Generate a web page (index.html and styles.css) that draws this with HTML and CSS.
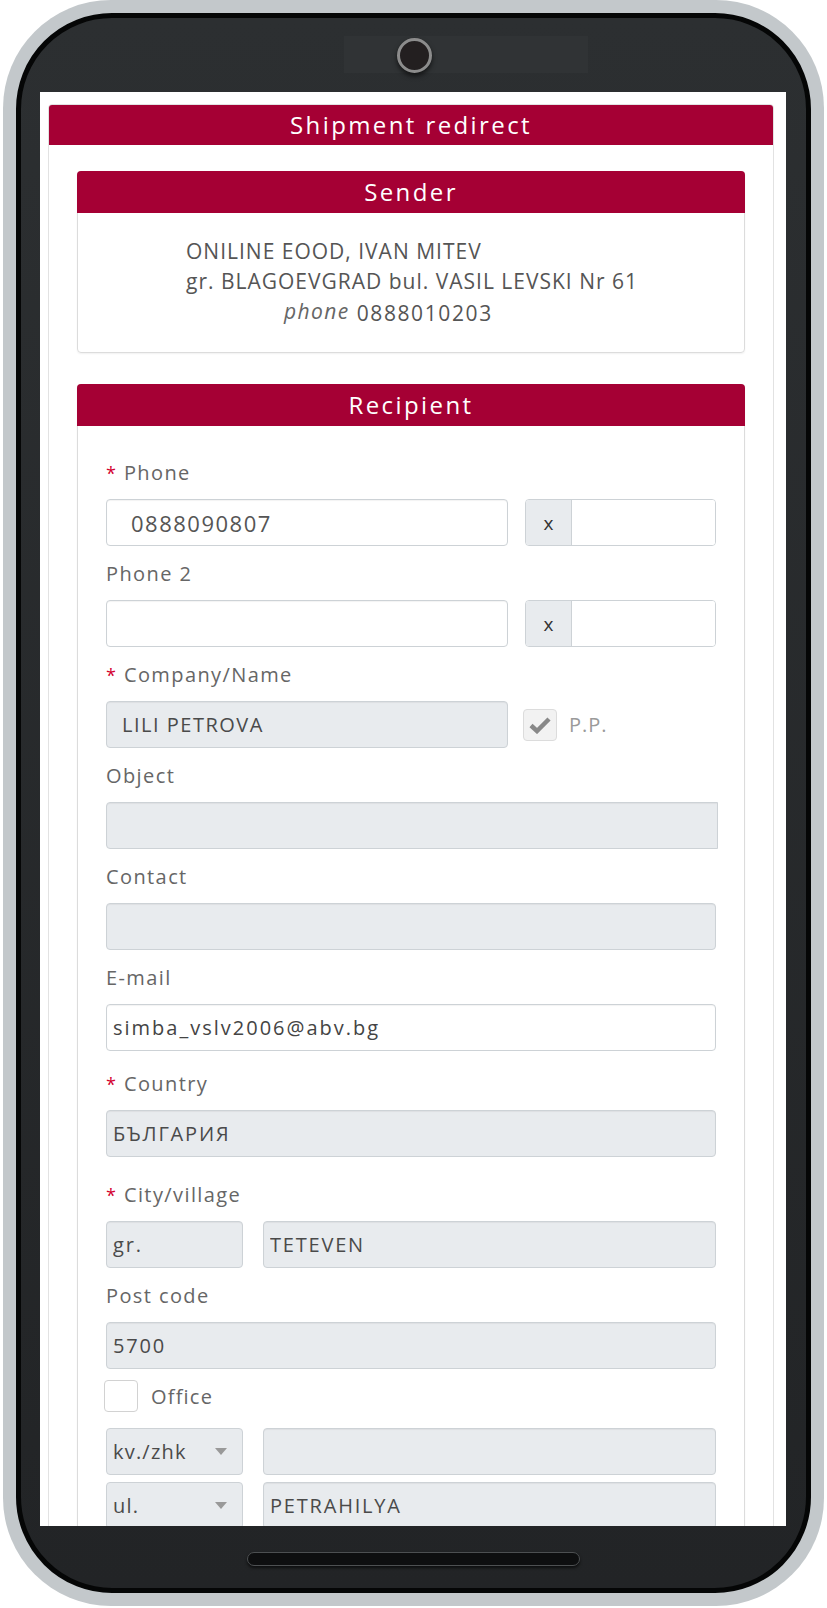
FILE: index.html
```html
<!DOCTYPE html>
<html lang="en">
<head>
  <meta charset="UTF-8">
  <title>Shipment redirect</title>
  <link rel="stylesheet" href="styles.css">
</head>
<body>

  <div class="phone">
    <div class="bezel">
      <div class="bezel-top">
        <div class="speaker"></div>
        <div class="camera"></div>
      </div>

      <div class="screen">
        <div class="panel">
          <div class="panel-title">Shipment redirect</div>
          <div class="panel-body">

            <div class="card">
              <div class="card-title">Sender</div>
              <div class="sender-info">
                <div class="sender-line">ONILINE EOOD, IVAN MITEV</div>
                <div class="sender-line">gr. BLAGOEVGRAD bul. VASIL LEVSKI Nr 61</div>
                <div class="sender-line sender-phone"><i>phone</i> 0888010203</div>
              </div>
            </div>

            <div class="card">
              <div class="card-title">Recipient</div>
              <form class="recipient-form">

                <div class="form-group">
                  <label class="form-label"><span class="req">*</span> Phone</label>
                  <div class="row-ext">
                    <input type="text" class="form-input phone-input" value="0888090807">
                    <div class="ext-group">
                      <span class="ext-addon">x</span>
                      <input type="text" class="ext-input" value="">
                    </div>
                  </div>
                </div>

                <div class="form-group">
                  <label class="form-label">Phone 2</label>
                  <div class="row-ext">
                    <input type="text" class="form-input" value="">
                    <div class="ext-group">
                      <span class="ext-addon">x</span>
                      <input type="text" class="ext-input" value="">
                    </div>
                  </div>
                </div>

                <div class="form-group">
                  <label class="form-label"><span class="req">*</span> Company/Name</label>
                  <div class="row-ext">
                    <input type="text" class="form-input locked name-input" value="LILI PETROVA" readonly>
                    <div class="pp-check">
                      <span class="check-box checked">
                        <svg width="22" height="18" viewBox="0 0 22 18"><path d="M2 9.5 L8 15 L20 3" fill="none" stroke="#888" stroke-width="4.5"/></svg>
                      </span>
                      <span class="check-label">P.P.</span>
                    </div>
                  </div>
                </div>

                <div class="form-group">
                  <label class="form-label">Object</label>
                  <input type="text" class="form-input locked object-input" value="" readonly>
                </div>

                <div class="form-group">
                  <label class="form-label">Contact</label>
                  <input type="text" class="form-input locked" value="" readonly>
                </div>

                <div class="form-group">
                  <label class="form-label">E-mail</label>
                  <input type="text" class="form-input email-input" value="simba_vslv2006@abv.bg">
                </div>

                <div class="form-group country-group">
                  <label class="form-label"><span class="req">*</span> Country</label>
                  <input type="text" class="form-input locked" value="БЪЛГАРИЯ" readonly>
                </div>

                <div class="form-group city-group">
                  <label class="form-label"><span class="req">*</span> City/village</label>
                  <div class="row-split">
                    <input type="text" class="form-input locked" value="gr." readonly>
                    <input type="text" class="form-input locked" value="TETEVEN" readonly>
                  </div>
                </div>

                <div class="form-group post-group">
                  <label class="form-label">Post code</label>
                  <input type="text" class="form-input locked" value="5700" readonly>
                </div>

                <div class="office-row">
                  <span class="check-box"></span>
                  <span class="office-label">Office</span>
                </div>

                <div class="row-split address-row">
                  <div class="select-box">kv./zhk <span class="caret"></span></div>
                  <input type="text" class="form-input locked" value="" readonly>
                </div>

                <div class="row-split address-row">
                  <div class="select-box">ul. <span class="caret"></span></div>
                  <input type="text" class="form-input locked" value="PETRAHILYA" readonly>
                </div>

              </form>
            </div>

          </div>
        </div>
      </div>

      <div class="bezel-bottom">
        <div class="home-bar"></div>
      </div>
    </div>
  </div>

</body>
</html>
```

FILE: styles.css
```css
body {
  margin: 0;
  background-color: #fff;
  font-family: "Open Sans", "Liberation Sans", sans-serif;
}

/* phone frame */

.phone {
  width: 821px;
  height: 1606px;
  margin-left: 3px;
  padding: 13px;
  box-sizing: border-box;
  background-color: #c3c8cb;
  border-radius: 108px;
}

.bezel {
  height: 100%;
  box-sizing: border-box;
  border: 5px solid #050606;
  border-radius: 96px;
  background: linear-gradient(#2c2f31, #222426);
  padding: 0 20px 0 19px;
  display: flex;
  flex-direction: column;
}

.bezel-top {
  position: relative;
  height: 74px;
  flex: none;
}

.speaker {
  width: 244px;
  height: 37px;
  margin: 18px 0 0 304px;
  background-color: #303335;
}

.camera {
  position: absolute;
  left: 357px;
  top: 20px;
  width: 29px;
  height: 29px;
  border: 3px solid #8c8c8c;
  border-radius: 50%;
  background-color: #231f20;
  box-shadow: 0 3px 5px rgba(0, 0, 0, 0.6);
}

.screen {
  height: 1434px;
  flex: none;
  background-color: #fff;
  overflow: hidden;
}

.bezel-bottom {
  flex: 1;
  display: flex;
  justify-content: center;
  padding-top: 26px;
}

.home-bar {
  width: 333px;
  height: 14px;
  box-sizing: border-box;
  border: 1px solid #4d5052;
  border-radius: 7px;
  background-color: #0e0f10;
  box-shadow: 0 2px 3px rgba(0, 0, 0, 0.6);
}

/* page */

.panel {
  margin: 12px 12px 0 8px;
  border: 1px solid #e2e2e2;
  border-radius: 4px 4px 0 0;
}

.panel-title,
.card-title {
  background-color: #a50034;
  color: #fff;
  text-align: center;
  font-size: 24px;
  letter-spacing: 2.4px;
}

.panel-title {
  height: 40px;
  line-height: 40px;
  border-radius: 3px 3px 0 0;
}

.panel-body {
  padding: 26px 28px 0;
}

.card {
  border: 1px solid #dcdcdc;
  border-radius: 4px;
  box-shadow: 0 1px 2px rgba(0, 0, 0, 0.06);
  margin-bottom: 31px;
}

.card-title {
  height: 42px;
  line-height: 42px;
  margin: -1px -1px 0;
  border-radius: 4px 4px 0 0;
}

.sender-info {
  padding: 23px 0 24px 108px;
  color: #555;
  font-size: 21px;
  letter-spacing: 1px;
}

.sender-line {
  line-height: 30px;
}

.sender-phone {
  margin-top: 2px;
  padding-left: 98px;
  letter-spacing: 1.6px;
}

.sender-phone i {
  font-size: 21px;
  color: #666;
  letter-spacing: 1.4px;
  position: relative;
  top: -2px;
}

/* recipient form */

.recipient-form {
  padding: 34px 28px 0;
}

.form-group {
  margin-bottom: 15px;
}

.form-label {
  display: block;
  margin-bottom: 13px;
  line-height: 26px;
  font-size: 20px;
  letter-spacing: 1.4px;
  color: #666;
}

.req {
  color: #d3002f;
  font-size: 18px;
}

.form-input {
  display: block;
  width: 100%;
  height: 47px;
  box-sizing: border-box;
  border: 1px solid #cdd2d6;
  border-radius: 4px;
  box-shadow: inset 0 1px 1px rgba(0, 0, 0, 0.05);
  padding: 0 6px;
  font-family: "Open Sans", "Liberation Sans", sans-serif;
  font-size: 20px;
  letter-spacing: 1.8px;
  color: #444;
  background-color: #fff;
}

.form-input.locked {
  background-color: #e8ebee;
  color: #4a4a4a;
}

.phone-input {
  padding-left: 24px;
  font-size: 22px;
  letter-spacing: 1.5px;
  color: #555;
}

.name-input {
  padding-left: 15px;
  letter-spacing: 1.5px;
}

.email-input {
  letter-spacing: 2px;
}

.object-input {
  width: calc(100% + 2px);
  border-radius: 4px 0 0 4px;
}

.row-ext {
  display: grid;
  grid-template-columns: 1fr 191px;
  gap: 17px;
  align-items: center;
}

.ext-group {
  display: flex;
  height: 47px;
  box-sizing: border-box;
  border: 1px solid #cdd2d6;
  border-radius: 4px;
  overflow: hidden;
}

.ext-addon {
  width: 45px;
  flex: none;
  display: flex;
  align-items: center;
  justify-content: center;
  background-color: #e8ebee;
  border-right: 1px solid #cdd2d6;
  font-size: 19px;
  color: #333;
}

.ext-input {
  flex: 1;
  min-width: 0;
  border: none;
  padding: 0 8px;
  font-size: 20px;
}

.pp-check {
  display: flex;
  align-items: center;
  gap: 12px;
  margin-left: -2px;
}

.check-box {
  width: 34px;
  height: 32px;
  box-sizing: border-box;
  border: 1px solid #d2d2d2;
  border-radius: 4px;
  background-color: #fff;
  display: flex;
  align-items: center;
  justify-content: center;
}

.check-box.checked {
  background-color: #f2f2f2;
  border-color: #dcdcdc;
}

.check-label {
  font-size: 20px;
  letter-spacing: 1px;
  color: #9a9a9a;
}

.country-group {
  padding-top: 5px;
}

.city-group {
  padding-top: 10px;
}

.post-group {
  margin-bottom: 11px;
}

.row-split {
  display: grid;
  grid-template-columns: 137px 1fr;
  gap: 20px;
}

.office-row {
  display: flex;
  align-items: center;
  gap: 13px;
  margin: 0 0 16px -2px;
}

.office-label {
  font-size: 20px;
  letter-spacing: 1.2px;
  color: #666;
}

.address-row {
  margin-bottom: 7px;
}

.select-box {
  display: flex;
  align-items: center;
  justify-content: space-between;
  height: 47px;
  box-sizing: border-box;
  padding: 0 15px 0 6px;
  border: 1px solid #cdd2d6;
  border-radius: 4px;
  background-color: #e8ebee;
  font-size: 20px;
  letter-spacing: 1.2px;
  color: #4a4a4a;
}

.caret {
  width: 0;
  height: 0;
  border-left: 6px solid transparent;
  border-right: 6px solid transparent;
  border-top: 7px solid #999;
}
```
